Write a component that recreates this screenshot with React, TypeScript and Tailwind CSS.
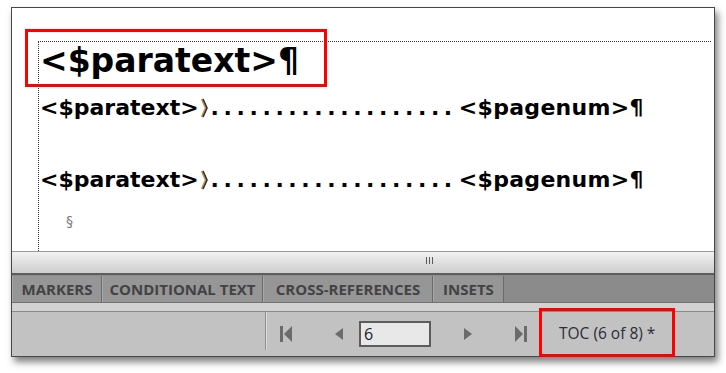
import React from 'react'

const doc = { fontFamily: '"DejaVu Sans", sans-serif' }
const ui = { fontFamily: '"Open Sans", "Liberation Sans", sans-serif' }

function TabChevron() {
    return (
        <svg width="8" height="22" viewBox="0 0 8 22" className="shrink-0">
            <path d="M2 2 L6 11 L2 20" fill="none" stroke="#e39a2c" strokeWidth="2.6" />
            <path d="M3 2 L7 11 L3 20" fill="none" stroke="#1d2f6b" strokeWidth="1.6" />
        </svg>
    )
}

function TocLine() {
    return (
        <div className="flex items-center h-[26px] text-[22px] font-bold text-black leading-[26px]" style={doc}>
            <span>{'<$paratext>'}</span>
            <span className="ml-[1px]"><TabChevron /></span>
            <span className="ml-[3px] tracking-[4.6px]">...................</span>
            <span className="ml-[2px] tracking-[0.3px]">{'<$pagenum>¶'}</span>
        </div>
    )
}

const tabs = [
    { label: 'MARKERS', w: 'w-[90px]' },
    { label: 'CONDITIONAL TEXT', w: 'w-[161px]' },
    { label: 'CROSS-REFERENCES', w: 'w-[170px]' },
    { label: 'INSETS', w: 'w-[71px]' },
]

export default function App() {
    return (
        <div className="relative w-[726px] h-[373px] bg-white overflow-hidden pt-[7px] pl-[11px]">
            <div className="w-[704px] h-[350px] border border-[#474747] flex flex-col bg-white shadow-[3px_5px_7px_rgba(0,0,0,0.5)]">
                {/* document area */}
                <div className="h-[243px] pt-[33px] pl-[26px] pr-[3px] flex flex-col">
                    <div className="flex-1 border-l border-t border-dotted border-[#333] pl-[1px]">
                        <div className="text-[33px] font-bold leading-[38px] text-black" style={doc}>
                            {'<$paratext>¶'}
                        </div>
                        <div className="mt-[15px]"><TocLine /></div>
                        <div className="mt-[46px]"><TocLine /></div>
                        <div className="mt-[20px] pl-[26px] text-[14px] leading-[17px] text-[#777]" style={doc}>§</div>
                    </div>
                </div>

                {/* splitter */}
                <div className="h-[22px] border-t border-[#9a9a9a] bg-gradient-to-b from-[#f2f2f2] to-[#cdcdcd] flex items-start pt-[5px] pl-[414px]">
                    <div className="flex gap-[2px]">
                        <div className="w-[1px] h-[7px] bg-[#5a5a5a]" />
                        <div className="w-[1px] h-[7px] bg-[#5a5a5a]" />
                        <div className="w-[1px] h-[7px] bg-[#5a5a5a]" />
                    </div>
                </div>

                {/* tab bar */}
                <div className="h-[29px] border-t-2 border-[#5e5e5e] bg-[#8b8b8b] flex">
                    {tabs.map((t) => (
                        <div
                            key={t.label}
                            className={`${t.w} h-[26px] mt-[1px] bg-[#969696] border-r border-[#6a6a6a] border-l border-l-[#a8a8a8] flex items-center justify-center text-[15px] font-bold text-[#434343]`}
                            style={ui}
                        >
                            {t.label}
                        </div>
                    ))}
                </div>

                {/* strip */}
                <div className="h-[10px] border-t border-[#727272] bg-[#d2d2d2] border-b border-b-[#8a8a8a]" />

                {/* navigation bar */}
                <div className="flex-1 bg-[#c2c2c2] flex items-center" style={ui}>
                    <div className="ml-[253px] h-[38px] w-[2px] border-l border-[#8e8e8e] border-r border-r-[#dcdcdc] self-start" />
                    <svg width="13" height="16" viewBox="0 0 13 16" className="ml-[13px]">
                        <rect x="0" y="0" width="3" height="16" fill="#6b6b6b" />
                        <path d="M12 0 L4 8 L12 16 Z" fill="#6b6b6b" />
                    </svg>
                    <svg width="8" height="12" viewBox="0 0 8 12" className="ml-[42px]">
                        <path d="M8 0 L0 6 L8 12 Z" fill="#6b6b6b" />
                    </svg>
                    <div className="ml-[16px] w-[72px] h-[26px] border-2 border-[#5c5c5c] bg-[#e8e8e8] flex items-center pl-[3px] text-[16px] text-[#1a1a2a]">
                        6
                    </div>
                    <svg width="8" height="12" viewBox="0 0 8 12" className="ml-[33px]">
                        <path d="M0 0 L8 6 L0 12 Z" fill="#6b6b6b" />
                    </svg>
                    <svg width="12" height="16" viewBox="0 0 12 16" className="ml-[43px]">
                        <path d="M0 0 L8 8 L0 16 Z" fill="#6b6b6b" />
                        <rect x="9" y="0" width="3" height="16" fill="#6b6b6b" />
                    </svg>
                    <div className="ml-[32px] text-[15.5px] text-[#2c2c3a] whitespace-nowrap">TOC (6 of 8) *</div>
                </div>
            </div>

            {/* annotation boxes */}
            <div className="absolute left-[25px] top-[29px] w-[302px] h-[58px] border-[3px] border-[#ff0000]" />
            <div className="absolute left-[539px] top-[308px] w-[136px] h-[49px] border-[3px] border-[#ff0000]" />
        </div>
    )
}
